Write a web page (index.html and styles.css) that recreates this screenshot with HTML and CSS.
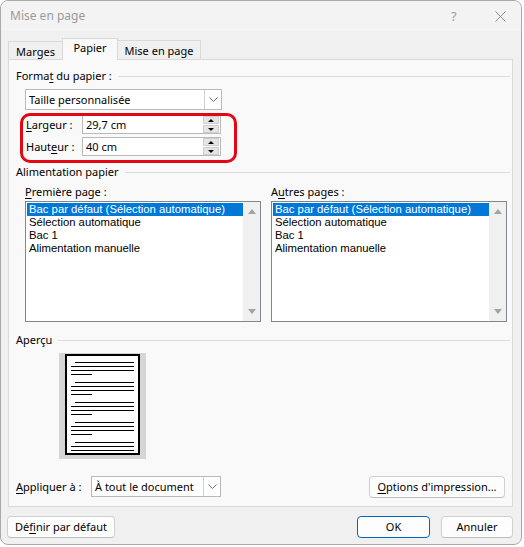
FILE: index.html
```html
<!DOCTYPE html>
<html lang="fr">
<head>
<meta charset="utf-8">
<title>Mise en page</title>
<link rel="stylesheet" href="styles.css">
</head>
<body>
<div class="window">
  <div class="titlebar">
    <span class="title">Mise en page</span>
    <span class="help">?</span>
    <svg class="close" width="11" height="11" viewBox="0 0 11 11"><path d="M0.5 0.5L10.5 10.5M10.5 0.5L0.5 10.5" stroke="#8c8c8c" stroke-width="1" fill="none"/></svg>
  </div>
  <div class="tabs">
    <div class="tab tab-marges">Marges</div>
    <div class="tab tab-active">Papier</div>
    <div class="tab tab-mise">Mise en page</div>
  </div>
  <div class="panel">
    <div class="group-title"><span>Forma<u>t</u> du papier :</span><span class="rule"></span></div>
    <div class="combo size-combo">
      <span class="combo-text">Taille personnalisée</span>
      <span class="combo-btn"><svg width="9" height="5" viewBox="0 0 9 5"><path d="M0.5 0.5L4.5 4.5L8.5 0.5" stroke="#6e6e6e" stroke-width="1" fill="none"/></svg></span>
    </div>
    <div class="dims">
      <div class="dim-row">
        <span class="dim-label"><u>L</u>argeur :</span>
        <div class="spin-input"><span class="spin-value">29,7 cm</span>
          <span class="spin"><span class="spin-btn"><span class="tri-up"></span></span><span class="spin-btn"><span class="tri-down"></span></span></span>
        </div>
      </div>
      <div class="dim-row">
        <span class="dim-label">Haut<u>e</u>ur :</span>
        <div class="spin-input"><span class="spin-value">40 cm</span>
          <span class="spin"><span class="spin-btn"><span class="tri-up"></span></span><span class="spin-btn"><span class="tri-down"></span></span></span>
        </div>
      </div>
      <div class="annotation"></div>
    </div>

    <div class="group-title feed-title"><span>Alimentation papier</span><span class="rule"></span></div>
    <div class="lists">
      <div class="list-col">
        <div class="list-label"><u>P</u>remière page :</div>
        <div class="listbox">
          <div class="items">
            <div class="item selected">Bac par défaut (Sélection automatique)</div>
            <div class="item">Sélection automatique</div>
            <div class="item">Bac 1</div>
            <div class="item">Alimentation manuelle</div>
          </div>
          <div class="scrollbar"><span class="sb-up"></span><span class="sb-down"></span></div>
        </div>
      </div>
      <div class="list-col">
        <div class="list-label">A<u>u</u>tres pages :</div>
        <div class="listbox">
          <div class="items">
            <div class="item selected">Bac par défaut (Sélection automatique)</div>
            <div class="item">Sélection automatique</div>
            <div class="item">Bac 1</div>
            <div class="item">Alimentation manuelle</div>
          </div>
          <div class="scrollbar"><span class="sb-up"></span><span class="sb-down"></span></div>
        </div>
      </div>
    </div>

    <div class="group-title preview-title"><span>Aperçu</span><span class="rule"></span></div>
    <div class="preview">
      <div class="page">
        <div class="para"><span class="ln ln-ind"></span><span class="ln ln-full"></span><span class="ln ln-full"></span><span class="ln ln-short"></span></div>
        <div class="para"><span class="ln ln-ind"></span><span class="ln ln-full"></span><span class="ln ln-full"></span><span class="ln ln-short"></span></div>
        <div class="para"><span class="ln ln-ind"></span><span class="ln ln-full"></span><span class="ln ln-full"></span><span class="ln ln-short"></span></div>
        <div class="para"><span class="ln ln-ind"></span><span class="ln ln-full"></span><span class="ln ln-full"></span><span class="ln ln-short"></span></div>
        <div class="para"><span class="ln ln-ind"></span><span class="ln ln-full"></span><span class="ln ln-full"></span><span class="ln ln-short"></span></div>
      </div>
    </div>

    <div class="apply-row">
      <span class="apply-label"><u>A</u>ppliquer à :</span>
      <div class="combo apply-combo">
        <span class="combo-text">À tout le document</span>
        <span class="combo-btn"><svg width="9" height="5" viewBox="0 0 9 5"><path d="M0.5 0.5L4.5 4.5L8.5 0.5" stroke="#6e6e6e" stroke-width="1" fill="none"/></svg></span>
      </div>
      <button class="btn options-btn"><u>O</u>ptions d'impression...</button>
    </div>
  </div>
  <div class="footer">
    <button class="btn default-btn">Dé<u>f</u>inir par défaut</button>
    <button class="btn ok-btn">OK</button>
    <button class="btn cancel-btn">Annuler</button>
  </div>
</div>
</body>
</html>
```
FILE: styles.css
```css
* { box-sizing: border-box; }
html, body {
  margin: 0;
  padding: 0;
}
body {
  width: 524px;
  height: 547px;
  overflow: hidden;
  background: #ffffff;
  font-family: "Noto Sans", "Liberation Sans", sans-serif;
  font-size: 11px;
  line-height: 16px;
  color: #000;
}
u { text-decoration-thickness: 1px; text-underline-offset: 2px; }

.window {
  width: 522px;
  height: 545px;
  border: 1px solid #a9a9a9;
  border-radius: 8px;
  background: #f0f0f0;
  display: flex;
  flex-direction: column;
  overflow: hidden;
}

.titlebar {
  height: 30px;
  flex: none;
  display: flex;
  align-items: center;
  padding-left: 9px;
  background: #f3f3f3;
}
.title {
  font-size: 12px;
  color: #9b9b9b;
}
.help {
  margin-left: auto;
  font-size: 13px;
  color: #9b9b9b;
  width: 8px;
}
.close {
  margin-left: 36px;
  margin-right: 15px;
}

.tabs {
  height: 28px;
  flex: none;
  display: flex;
  align-items: flex-end;
  padding-left: 7px;
  position: relative;
  z-index: 1;
}
.tab {
  border: 1px solid #d9d9d9;
  border-bottom: none;
  background: #f0f0f0;
  display: flex;
  align-items: center;
  justify-content: center;
  font-size: 11px;
}
.tab-marges { width: 55px; height: 18px; padding-top: 2px; margin-right: -1px; }
.tab-active {
  width: 56px;
  height: 22px;
  margin-bottom: -1px;
  background: #f9f9f9;
  padding-bottom: 3px;
  position: relative;
  z-index: 2;
}
.tab-mise { width: 84px; height: 19px; padding-top: 2px; margin-left: -1px; }

.panel {
  height: 448px;
  flex: none;
  margin: 0 8px 0 7px;
  border: 1px solid #dadada;
  background: #f9f9f9;
  padding: 0 2px 0 7px;
  display: flex;
  flex-direction: column;
}

.group-title {
  display: flex;
  align-items: center;
  height: 16px;
  margin-top: 8px;
  white-space: nowrap;
}
.rule {
  flex: 1;
  height: 1px;
  background: #dcdcdc;
  margin-left: 6px;
}
.feed-title { margin-top: 8px; }
.preview-title { margin-top: 10px; }

.combo {
  height: 21px;
  background: #fff;
  border: 1px solid #b9b9b9;
  display: flex;
  align-items: center;
  padding-left: 3px;
}
.combo-text { flex: 1; white-space: nowrap; }
.combo-btn {
  width: 17px;
  height: 19px;
  border-left: 1px solid #d0d0d0;
  display: flex;
  align-items: center;
  justify-content: center;
  background: #fff;
}
.size-combo {
  margin-top: 5px;
  margin-left: 9px;
  width: 197px;
}

.dims {
  position: relative;
  margin-top: 5px;
  display: flex;
  flex-direction: column;
  gap: 3px;
}
.dim-row {
  display: flex;
  align-items: center;
  height: 19px;
  padding-left: 10px;
}
.dim-label { width: 56px; }
.spin-input {
  width: 139px;
  height: 19px;
  border: 1px solid #b9b9b9;
  background: #fff;
  display: flex;
  align-items: center;
  padding-left: 3px;
}
.spin-value { flex: 1; }
.spin {
  width: 16px;
  height: 17px;
  display: flex;
  flex-direction: column;
  gap: 1px;
  margin-right: 1px;
}
.spin-btn {
  flex: 1;
  background: #e5e5e5;
  border: 1px solid #cfcfcf;
  display: flex;
  align-items: center;
  justify-content: center;
}
.tri-up {
  width: 0; height: 0;
  border-left: 3px solid transparent;
  border-right: 3px solid transparent;
  border-bottom: 3px solid #000;
}
.tri-down {
  width: 0; height: 0;
  border-left: 3px solid transparent;
  border-right: 3px solid transparent;
  border-top: 3px solid #000;
}
.annotation {
  position: absolute;
  left: 4px;
  top: -2px;
  width: 217px;
  height: 50px;
  border: 3px solid #e30613;
  border-radius: 10px;
  pointer-events: none;
}

.lists {
  display: flex;
  gap: 10px;
  margin-top: 4px;
  padding-left: 9px;
}
.list-col {
  width: 236px;
  display: flex;
  flex-direction: column;
}
.list-label { height: 16px; white-space: nowrap; }
.listbox {
  margin-top: 1px;
  height: 121px;
  border: 1px solid #82878f;
  background: #fff;
  display: flex;
}
.items {
  flex: 1;
  padding: 1px 0 0 1px;
}
.item {
  height: 13px;
  line-height: 13px;
  padding-left: 2px;
  white-space: nowrap;
  font-family: "Liberation Sans", "Noto Sans", sans-serif;
  font-size: 11.3px;
}
.item.selected {
  background: #0078d7;
  color: #fff;
}
.scrollbar {
  width: 17px;
  background: #f0f0f0;
  display: flex;
  flex-direction: column;
  justify-content: space-between;
  align-items: center;
  padding: 7px 0 7px;
}
.sb-up {
  width: 0; height: 0;
  border-left: 4px solid transparent;
  border-right: 4px solid transparent;
  border-bottom: 5px solid #a3a3a3;
}
.sb-down {
  width: 0; height: 0;
  border-left: 4px solid transparent;
  border-right: 4px solid transparent;
  border-top: 5px solid #a3a3a3;
}

.preview {
  margin-top: 5px;
  margin-left: 43px;
  width: 87px;
  height: 106px;
  background: #d5d5d5;
  padding: 1px 6px 0;
}
.page {
  width: 75px;
  height: 101px;
  border: 2px solid #000;
  background: #fff;
  overflow: hidden;
  padding: 6px 0 0 4px;
}
.para {
  display: flex;
  flex-direction: column;
  gap: 3px;
  margin-bottom: 7px;
}
.ln {
  display: block;
  height: 1px;
  background: #000;
  flex: none;
}
.ln-full { width: 63px; }
.ln-ind { width: 59px; margin-left: 4px; }
.ln-short { width: 21px; }

.apply-row {
  display: flex;
  align-items: center;
  margin-top: 17px;
  height: 21px;
}
.apply-label { width: 75px; white-space: nowrap; }
.apply-combo {
  width: 130px;
  height: 21px;
}
.btn {
  font-family: inherit;
  font-size: 11px;
  line-height: 16px;
  color: #000;
  background: #fdfdfd;
  border: 1px solid #d0d0d0;
  border-bottom-color: #bdbdbd;
  border-radius: 4px;
  height: 22px;
  padding: 0;
  white-space: nowrap;
}
.options-btn {
  margin-left: auto;
  margin-right: 5px;
  width: 136px;
}

.footer {
  display: flex;
  margin-top: 9px;
  padding: 0 8px 0 6px;
}
.default-btn { width: 108px; }
.ok-btn {
  margin-left: auto;
  width: 73px;
  border: 1px solid #0067c0;
}
.cancel-btn {
  margin-left: 11px;
  width: 72px;
}
```
